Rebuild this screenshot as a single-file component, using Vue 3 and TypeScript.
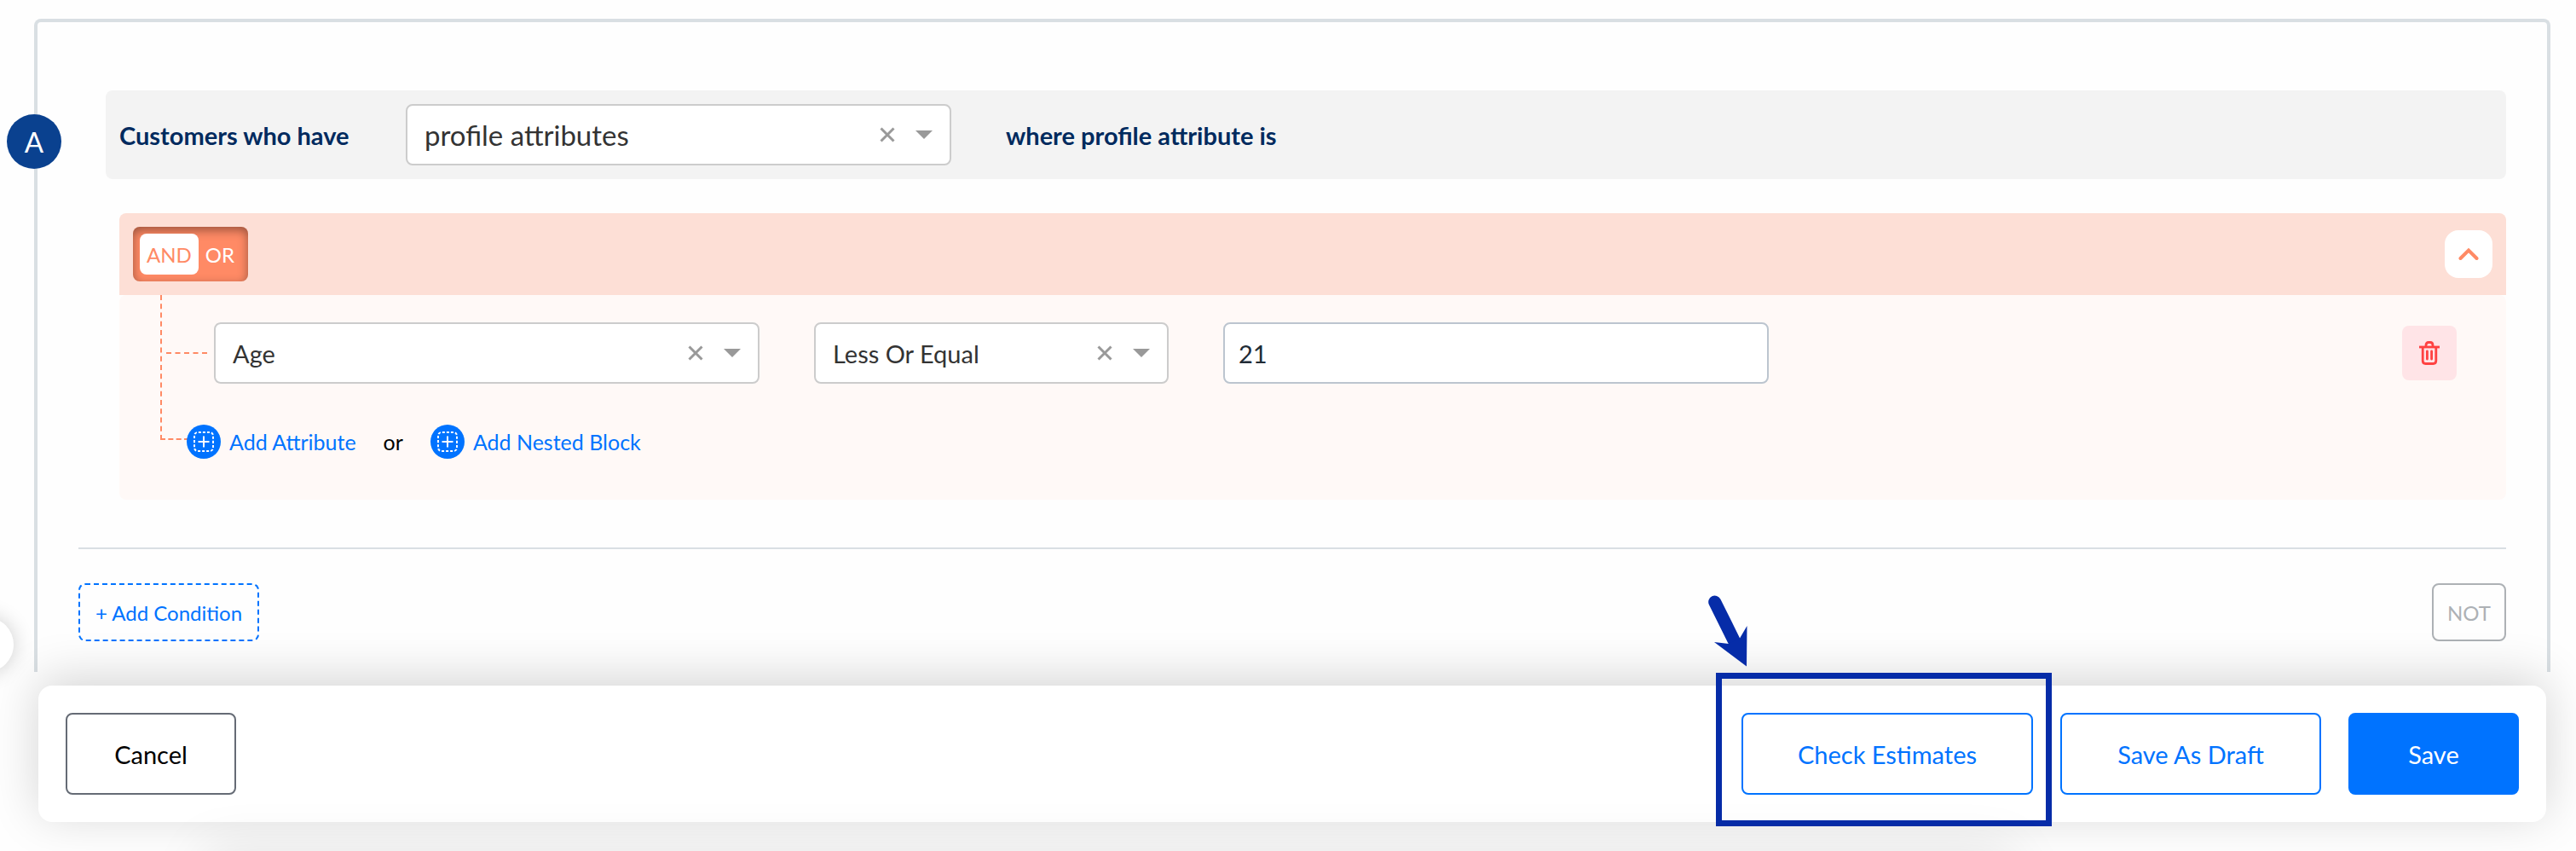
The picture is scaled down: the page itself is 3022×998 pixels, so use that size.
<script setup lang="ts">
import { ref } from 'vue'

type Operator = 'AND' | 'OR'

const source = ref('profile attributes')
const attribute = ref('Age')
const comparison = ref('Less Or Equal')
const amount = ref('21')
const operators: Operator[] = ['AND', 'OR']
const operator = ref<Operator>('AND')
const negated = ref(false)
const additions = ['Add Attribute', 'Add Nested Block']
</script>

<template>
  <main class="page">
    <button class="drawer-handle" type="button" aria-label="Open panel"></button>

    <section class="frame">
      <span class="badge">A</span>

      <div class="source-bar">
        <label class="source-label" for="source">Customers who have</label>
        <div class="picker picker-large">
          <select id="source" v-model="source">
            <option>profile attributes</option>
          </select>
          <div class="picker-icons">
            <button type="button" aria-label="Clear source" @click="source = ''">
              <svg width="18" height="18" viewBox="0 0 18 18"><path d="M1.500 1.500 16.500 16.500M16.500 1.500 1.500 16.500" /></svg>
            </button>
            <svg class="caret" width="20" height="10" viewBox="0 0 20 10"><path d="M0 0H20L10 10Z" /></svg>
          </div>
        </div>
        <span class="source-tail">where profile attribute is</span>
      </div>

      <div class="block">
        <header class="block-header">
          <div class="toggle" role="group" aria-label="Operator">
            <button
              v-for="name in operators"
              :key="name"
              type="button"
              :class="{ active: operator === name }"
              :aria-pressed="operator === name"
              @click="operator = name"
            >{{ name }}</button>
          </div>
          <button class="collapse" type="button" aria-label="Collapse">
            <svg width="24" height="16" viewBox="0 0 24 16"><path d="M2.500 13 12 3.500 21.500 13" /></svg>
          </button>
        </header>

        <div class="block-body">
          <div class="rule">
            <div class="picker">
              <select v-model="attribute" aria-label="Attribute">
                <option>Age</option>
              </select>
              <div class="picker-icons">
                <button type="button" aria-label="Clear attribute" @click="attribute = ''">
                  <svg width="18" height="18" viewBox="0 0 18 18"><path d="M1.500 1.500 16.500 16.500M16.500 1.500 1.500 16.500" /></svg>
                </button>
                <svg class="caret" width="20" height="10" viewBox="0 0 20 10"><path d="M0 0H20L10 10Z" /></svg>
              </div>
            </div>
            <div class="picker picker-short">
              <select v-model="comparison" aria-label="Comparison">
                <option>Less Or Equal</option>
              </select>
              <div class="picker-icons">
                <button type="button" aria-label="Clear comparison" @click="comparison = ''">
                  <svg width="18" height="18" viewBox="0 0 18 18"><path d="M1.500 1.500 16.500 16.500M16.500 1.500 1.500 16.500" /></svg>
                </button>
                <svg class="caret" width="20" height="10" viewBox="0 0 20 10"><path d="M0 0H20L10 10Z" /></svg>
              </div>
            </div>
            <input v-model="amount" class="amount" type="text" aria-label="Value" />
            <button class="remove" type="button" aria-label="Delete rule">
              <svg width="24" height="28" viewBox="0 0 24 28">
                <path d="M0 7H24" />
                <path d="M8 7V5Q8 1.500 11 1.500H13Q16 1.500 16 5V7" />
                <path d="M4.200 7V23Q4.200 26.500 7.500 26.500H16.500Q19.800 26.500 19.800 23V7" />
                <path d="M9.400 12V21M14.600 12V21" stroke-linecap="round" />
              </svg>
            </button>
          </div>

          <div class="additions">
            <template v-for="(name, index) in additions" :key="name">
              <span v-if="index > 0">or</span>
              <button type="button">
                <svg width="40" height="40" viewBox="0 0 40 40">
                  <circle cx="20" cy="20" r="20" />
                  <rect x="9" y="9" width="22" height="22" rx="4" pathLength="96" stroke-dashoffset="-1" />
                  <path d="M20 13.500V26.500M13.500 20H26.500" />
                </svg>
                {{ name }}
              </button>
            </template>
          </div>
        </div>
      </div>

      <div class="frame-footer">
        <button class="add-condition" type="button">+ Add Condition</button>
        <button class="not" type="button" :aria-pressed="negated" @click="negated = !negated">NOT</button>
      </div>
    </section>

    <footer class="action-bar">
      <button class="action cancel" type="button">Cancel</button>
      <div class="spotlight">
        <button class="action outlined" type="button">Check Estimates</button>
        <svg class="pointer" width="50" height="90" viewBox="0 0 50 90">
          <path class="shaft" d="M8.700 10 31 55" />
          <path d="M46 85.500 8 57 25 59 38 52.500 46.500 38Z" />
        </svg>
      </div>
      <button class="action outlined" type="button">Save As Draft</button>
      <button class="action save" type="button">Save</button>
    </footer>

    <div class="next-panel" aria-hidden="true"></div>
  </main>
</template>

<style>
body {
  margin: 0;
  background: #fff;
}
</style>

<style scoped>
.page {
  position: relative;
  box-sizing: border-box;
  min-height: 100vh;
  padding: 22px 30px 34px 40px;
  overflow: hidden;
  background: #fefefe;
  color: #000;
  font-family: Lato, "Open Sans", sans-serif;
  font-size: 29px;
}

.page * {
  box-sizing: border-box;
}

button,
select,
input {
  margin: 0;
  padding: 0;
  border: 0;
  background: none;
  color: inherit;
  font: inherit;
}

button {
  cursor: pointer;
}

svg {
  display: block;
}

.drawer-handle {
  position: absolute;
  top: 724px;
  left: -48px;
  width: 64px;
  height: 64px;
  border-radius: 50%;
  background: #fff;
  box-shadow: 0 0 24px rgba(0, 0, 0, 0.2);
}

.frame {
  position: relative;
  padding: 80px 48px 36px;
  border: 4px solid #d9dfe3;
  border-bottom: 0;
  border-radius: 8px 8px 0 0;
}

.badge {
  position: absolute;
  top: 108px;
  left: -36px;
  display: flex;
  align-items: center;
  justify-content: center;
  width: 64px;
  height: 64px;
  border-radius: 50%;
  background: #0a418f;
  color: #fff;
  font-size: 33px;
}

.source-bar {
  display: flex;
  align-items: center;
  height: 104px;
  margin-left: 32px;
  padding: 0 16px;
  border-radius: 8px;
  background: #f3f3f3;
  color: #002a5e;
  font-weight: 700;
}

.source-label {
  flex: 0 0 336px;
}

.source-tail {
  margin-left: 64px;
}

.picker {
  display: grid;
  flex: 0 1 640px;
  height: 72px;
  border: 2px solid #ccc;
  border-radius: 8px;
  background: #fff;
  color: #333;
  font-weight: 400;
}

.picker-large {
  font-size: 33px;
}

.picker-short {
  flex-basis: 416px;
}

.picker select {
  grid-area: 1 / 1;
  width: 100%;
  padding: 0 96px 0 20px;
  border-radius: 8px;
  appearance: none;
}

.picker-icons {
  display: flex;
  grid-area: 1 / 1;
  align-items: center;
  justify-self: end;
  gap: 24px;
  padding-right: 20px;
  pointer-events: none;
}

.picker-icons button {
  pointer-events: auto;
}

.picker-icons button path {
  stroke: #999;
  stroke-width: 3;
}

.caret {
  fill: #999;
}

.block {
  margin: 40px 0 0 48px;
}

.block-header {
  display: flex;
  align-items: center;
  justify-content: space-between;
  height: 96px;
  padding: 0 16px;
  border-radius: 8px 8px 0 0;
  background: #fddfd6;
}

.toggle {
  display: flex;
  height: 64px;
  padding: 8px;
  border-radius: 8px;
  background: #ff8a65;
  box-shadow: inset 0 4px 12px rgba(0, 0, 0, 0.4);
  color: #fff;
  font-size: 24px;
}

.toggle button {
  padding: 0 8px;
  border-radius: 8px;
}

.toggle .active {
  background: #fff;
  color: #ff8a65;
}

.collapse {
  display: flex;
  align-items: center;
  justify-content: center;
  width: 56px;
  height: 56px;
  border-radius: 16px;
  background: #fff;
}

.collapse path {
  fill: none;
  stroke: #ff8a65;
  stroke-width: 4;
  stroke-linecap: round;
}

.block-body {
  position: relative;
  padding: 32px 58px 48px 111px;
  border-radius: 8px;
  background: #fff9f7;
}

.block-body::before {
  content: "";
  position: absolute;
  top: 0;
  left: 48px;
  width: 32px;
  height: 168px;
  border: dashed #ff8a65;
  border-width: 0 0 2px 2px;
}

.rule {
  position: relative;
  display: flex;
  align-items: center;
  gap: 64px;
}

.rule::before {
  content: "";
  position: absolute;
  top: 35px;
  left: -56px;
  width: 48px;
  border-top: 2px dashed #ff8a65;
}

.amount {
  flex: 0 1 640px;
  min-width: 0;
  height: 72px;
  padding: 0 16px;
  border: 2px solid #bcc5cf;
  border-radius: 8px;
  background: #fff;
  color: #212b36;
}

.remove {
  display: flex;
  align-items: center;
  justify-content: center;
  width: 64px;
  height: 64px;
  margin-left: auto;
  border-radius: 8px;
  background: #ffe4e7;
}

.remove path {
  fill: none;
  stroke: #ff4242;
  stroke-width: 2.8;
}

.additions {
  position: relative;
  display: flex;
  align-items: center;
  gap: 32px;
  margin: 48px 0 0 -32px;
  font-size: 25px;
}

.additions button {
  display: flex;
  align-items: center;
  gap: 10px;
  color: #0073ff;
}

.additions circle {
  fill: #0073ff;
}

.additions rect,
.additions path {
  fill: none;
  stroke: #fff;
  stroke-width: 2;
}

.additions rect {
  stroke-dasharray: 3.6 2.4;
}

.frame-footer {
  display: flex;
  justify-content: space-between;
  margin-top: 56px;
  padding-top: 40px;
  border-top: 2px solid #d9dfe3;
  font-size: 24px;
}

.frame-footer button {
  height: 68px;
  border-radius: 8px;
}

.add-condition {
  padding: 0 18px;
  border: 2px dashed #0073ff;
  color: #0073ff;
}

.not {
  padding: 0 16px;
  border: 2px solid #adb1b5;
  color: #adb1b5;
}

.action-bar {
  position: relative;
  display: flex;
  gap: 32px;
  margin: 16px 5px 0;
  padding: 32px;
  border-radius: 16px;
  background: #fff;
  box-shadow: 0 -8px 56px rgba(0, 0, 0, 0.17);
}

.action {
  min-width: 200px;
  height: 96px;
  padding: 0 48px;
  border: 2px solid #0073ff;
  border-radius: 8px;
}

.cancel {
  margin-right: auto;
  border-color: #656b75;
}

.outlined {
  min-width: 306px;
  padding: 0 64px;
  color: #0073ff;
}

.save {
  background: #0073ff;
  color: #fff;
}

.spotlight {
  position: relative;
}

.spotlight::after {
  content: "";
  position: absolute;
  inset: -47px -22px -37px -30px;
  border: 7px solid #062ca8;
  pointer-events: none;
}

.pointer {
  position: absolute;
  top: -140px;
  left: -40px;
  fill: #062ca8;
}

.shaft {
  stroke: #062ca8;
  stroke-width: 15;
  stroke-linecap: round;
}

.next-panel {
  position: absolute;
  top: 100%;
  right: 660px;
  left: 240px;
  height: 80px;
  box-shadow: 0 0 64px rgba(0, 0, 0, 0.1);
  pointer-events: none;
}
</style>
